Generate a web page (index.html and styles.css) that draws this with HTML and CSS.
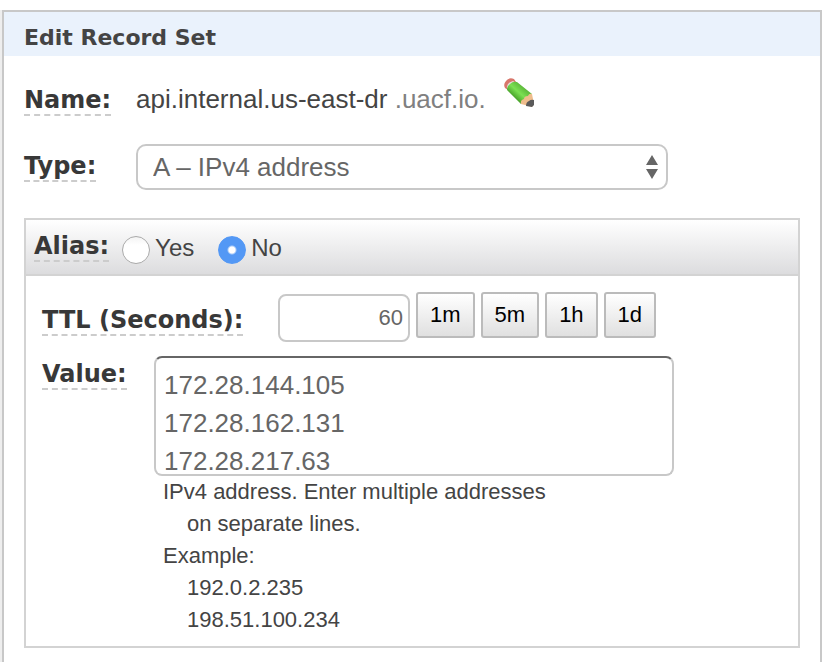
FILE: index.html
```html
<!DOCTYPE html>
<html lang="en">
<head>
  <meta charset="UTF-8">
  <meta name="viewport" content="width=device-width, initial-scale=1.0">
  <title>Edit Record Set</title>
  <link rel="stylesheet" href="styles.css">
</head>
<body>
  <div class="page">
    <form class="panel">
      <h1>Edit Record Set</h1>

      <div class="row name-row">
        <span class="label-col"><label for="name">Name:</label></span>
        <output id="name" class="name-value">api.internal.us-east-dr <span class="domain">.uacf.io.</span></output>
        <button type="button" class="edit" aria-label="Edit name">
          <svg width="30" height="30" viewBox="0 0 30 30">
            <defs>
              <linearGradient id="wood-green" x1="0" y1="1" x2="1" y2="0">
                <stop offset="0.3" stop-color="#4aa52c"/>
                <stop offset="0.5" stop-color="#7be052"/>
                <stop offset="0.7" stop-color="#5fbb3c"/>
              </linearGradient>
            </defs>
            <path d="M1 10Q-1 6 2 3Q5 -1 10 1L12 4L4 12Z" fill="#d8766b"/>
            <path d="M3 10Q2 5 9 3L12 5L5 12Z" fill="#e3dedb"/>
            <path d="M3 12Q3 8 6 6Q9 3 13 4L28 16L17 26Z" fill="url(#wood-green)"/>
            <path d="M17 26Q16 22 20 21Q20 18 24 18Q25 15 28 16L30 26L28 29L25 28Z" fill="#efbd8c"/>
            <path d="M22 28Q22 24 25 23Q27 21 30 22L30 27L28 29Z" fill="#5a5a5a"/>
          </svg>
        </button>
      </div>

      <div class="row type-row">
        <span class="label-col"><label for="type">Type:</label></span>
        <div class="select-wrap">
          <select id="type">
            <option>A – IPv4 address</option>
          </select>
          <svg class="arrows" width="12" height="24" viewBox="0 0 12 24">
            <path d="M6 0L12 10H0Z M0 14H12L6 24Z" fill="#666"/>
          </svg>
        </div>
      </div>

      <div class="box">
        <div class="alias" role="radiogroup" aria-labelledby="alias">
          <span id="alias" class="label">Alias:</span>
          <label class="radio"><input type="radio" name="alias">Yes</label>
          <label class="radio"><input type="radio" name="alias" checked>No</label>
        </div>

        <div class="box-body">
          <div class="row ttl-row">
            <span class="label-col"><label for="ttl">TTL (Seconds):</label></span>
            <input type="text" id="ttl" value="60">
            <button type="button" class="btn">1m</button>
            <button type="button" class="btn">5m</button>
            <button type="button" class="btn">1h</button>
            <button type="button" class="btn">1d</button>
          </div>

          <div class="row value-row">
            <span class="label-col"><label for="value">Value:</label></span>
            <div class="value-col">
              <textarea id="value">172.28.144.105
172.28.162.131
172.28.217.63</textarea>
              <div class="hint">
                <p>IPv4 address. Enter multiple addresses on separate lines.</p>
                <p>Example:<br>192.0.2.235<br>198.51.100.234</p>
              </div>
            </div>
          </div>
        </div>
      </div>
    </form>
  </div>
</body>
</html>
```

FILE: styles.css
```css
* {
  box-sizing: border-box;
}
body {
  margin: 0;
  padding-top: 10px;
  background-color: #fff;
  color: #444;
  font-family: "Liberation Sans", Arial, sans-serif;
}
.page {
  margin-right: 16px;
  border-left: 2px solid #eee;
}
.panel {
  min-height: calc(100vh - 10px);
  border: 2px solid #c8c8c8;
  border-bottom: none;
}
h1 {
  margin: 0;
  padding: 8px 20px 0;
  background-color: #eaf2fc;
  font: bold 22px/36px "DejaVu Sans", Verdana, sans-serif;
}

/* rows */
.row {
  display: flex;
  align-items: flex-start;
}
.label-col {
  flex: none;
  width: 112px;
  padding-top: 8px;
}
.label-col label,
.label {
  display: inline-block;
  vertical-align: top;
  border-bottom: 2px dashed #ccc;
  color: #383838;
  font: bold 24px/28px "DejaVu Sans", Verdana, sans-serif;
  white-space: nowrap;
}
.name-row {
  min-height: 46px;
  margin: 22px 20px 20px;
}
.name-value {
  font-size: 26px;
  line-height: 42px;
}
.domain {
  color: #808080;
}
.edit {
  margin-left: 18px;
  padding: 0;
  border: none;
  background: none;
  cursor: pointer;
}
.edit svg {
  display: block;
}
.type-row {
  margin: 0 20px 28px;
}
.select-wrap {
  position: relative;
  flex: 0 1 532px;
}
select {
  display: block;
  width: 100%;
  height: 46px;
  padding: 0 32px 0 15px;
  border: 2px solid #c8c8c8;
  border-radius: 10px;
  background-color: #fff;
  color: #666;
  font: 26px "Liberation Sans", Arial, sans-serif;
  appearance: none;
}
.arrows {
  position: absolute;
  top: 11px;
  right: 10px;
  pointer-events: none;
}

/* alias box */
.box {
  margin: 0 20px;
  border: 2px solid #d3d3d3;
}
.alias {
  display: flex;
  align-items: flex-start;
  height: 56px;
  padding: 12px 8px 0;
  border-bottom: 2px solid #d3d3d3;
  background: linear-gradient(#fff, #dcdcde);
}
.radio {
  display: flex;
  gap: 5px;
  margin: 4px 11px 0 13px;
  font-size: 24px;
  line-height: 24px;
}
.radio input {
  width: 28px;
  height: 28px;
  margin: 0;
  border: 1px solid #aaa;
  border-radius: 50%;
  background: linear-gradient(#f4f4f4, #fff 30%);
  appearance: none;
}
.radio input:checked {
  border-color: #5398f5;
  background: radial-gradient(circle, #fff 3px, #5398f5 5px);
}
.box-body {
  padding: 16px 16px 10px;
}
.ttl-row {
  gap: 6px;
  margin-bottom: 14px;
}
.ttl-row .label-col {
  width: 230px;
  padding-top: 14px;
}
#ttl {
  width: 132px;
  height: 48px;
  margin-top: 2px;
  padding: 0 5px;
  border: 2px solid #c8c8c8;
  border-radius: 8px;
  color: #666;
  font: 22px "Liberation Sans", Arial, sans-serif;
  text-align: right;
}
.btn {
  height: 46px;
  padding: 0 12px;
  border: 2px solid #bbb;
  border-radius: 3px;
  background: linear-gradient(#fff, #e0e0e0);
  color: #000;
  font: 22px "Liberation Sans", Arial, sans-serif;
  cursor: pointer;
}
.value-row .label-col {
  padding-top: 4px;
}
.value-col {
  flex: 0 1 520px;
}
textarea {
  display: block;
  width: 100%;
  height: 120px;
  padding: 8px;
  border: 2px solid #c8c8c8;
  border-top-color: #666;
  border-radius: 8px;
  color: #666;
  font: 26px/38px "Liberation Sans", Arial, sans-serif;
  overflow: hidden;
  resize: none;
}
.hint {
  max-width: 420px;
  padding-left: 33px;
  font-size: 22px;
  line-height: 32px;
}
.hint p {
  margin: 0;
  text-indent: -24px;
}
```
